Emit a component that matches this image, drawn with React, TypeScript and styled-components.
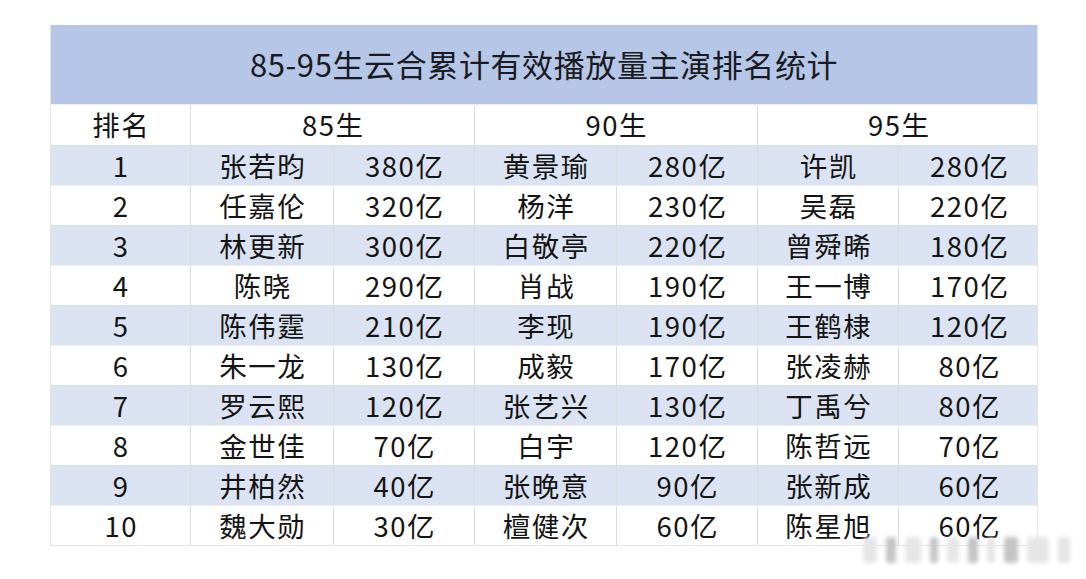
import React from 'react';
import styled, { createGlobalStyle } from 'styled-components';

const GlobalStyle = createGlobalStyle`
  html, body {
    margin: 0;
    padding: 0;
    background: #ffffff;
  }
  body {
    font-family: "Noto Sans CJK SC", "Noto Sans", sans-serif;
    color: #141414;
  }
`;

const COLS = '140px 143px 141px 142px 141px 141px 140px';

const Page = styled.div`
  position: relative;
  width: 1086px;
  height: 579px;
  padding: 25px 0 0 50px;
  box-sizing: border-box;
  overflow: hidden;
`;

const Table = styled.div`
  width: 988px;
  border-left: 1px solid #e4e4e4;
  border-right: 1px solid #e4e4e4;
  border-bottom: 1px solid #e4e4e4;
  box-sizing: border-box;
`;

const Title = styled.div`
  height: 79px;
  background: #b5c6e6;
  display: flex;
  align-items: center;
  justify-content: center;
  font-size: 31px;
  letter-spacing: 0.6px;
  color: #1a1b22;
  padding-bottom: 2px;
  box-sizing: border-box;
`;

const Row = styled.div<{ $shade?: boolean; $tall?: boolean }>`
  display: grid;
  grid-template-columns: ${COLS};
  height: ${({ $tall }) => ($tall ? '41px' : '40px')};
  background: ${({ $shade }) => ($shade ? '#dbe3f2' : '#ffffff')};
  border-top: 1px solid ${({ $shade }) => ($shade ? '#d6deee' : '#eeeeee')};
  box-sizing: border-box;
`;

const Cell = styled.div<{ $span?: number; $last?: boolean }>`
  grid-column: span ${({ $span }) => $span ?? 1};
  display: flex;
  align-items: center;
  justify-content: center;
  font-size: 27.5px;
  letter-spacing: 1.5px;
  padding-left: 1.5px;
  line-height: 1;
  overflow: hidden;
  border-right: ${({ $last }) => ($last ? 'none' : '1px solid #dcdcdc')};
`;

const Watermark = styled.div`
  position: absolute;
  left: 855px;
  top: 533px;
  width: 222px;
  height: 34px;
  display: flex;
  align-items: center;
  gap: 9px;
  padding-left: 8px;
  filter: blur(2px);
`;

const Streak = styled.span<{ $w: number; $dark?: boolean }>`
  width: ${({ $w }) => $w}px;
  height: 26px;
  background: ${({ $dark }) => ($dark ? '#c4c4c4' : '#e6e6e6')};
  border-radius: 3px;
`;

type Entry = [string, string];
const rows: { rank: string; a: Entry; b: Entry; c: Entry }[] = [
  { rank: '1', a: ['张若昀', '380亿'], b: ['黄景瑜', '280亿'], c: ['许凯', '280亿'] },
  { rank: '2', a: ['任嘉伦', '320亿'], b: ['杨洋', '230亿'], c: ['吴磊', '220亿'] },
  { rank: '3', a: ['林更新', '300亿'], b: ['白敬亭', '220亿'], c: ['曾舜晞', '180亿'] },
  { rank: '4', a: ['陈晓', '290亿'], b: ['肖战', '190亿'], c: ['王一博', '170亿'] },
  { rank: '5', a: ['陈伟霆', '210亿'], b: ['李现', '190亿'], c: ['王鹤棣', '120亿'] },
  { rank: '6', a: ['朱一龙', '130亿'], b: ['成毅', '170亿'], c: ['张凌赫', '80亿'] },
  { rank: '7', a: ['罗云熙', '120亿'], b: ['张艺兴', '130亿'], c: ['丁禹兮', '80亿'] },
  { rank: '8', a: ['金世佳', '70亿'], b: ['白宇', '120亿'], c: ['陈哲远', '70亿'] },
  { rank: '9', a: ['井柏然', '40亿'], b: ['张晚意', '90亿'], c: ['张新成', '60亿'] },
  { rank: '10', a: ['魏大勋', '30亿'], b: ['檀健次', '60亿'], c: ['陈星旭', '60亿'] },
];

export default function App() {
  return (
    <>
      <GlobalStyle />
      <Page>
        <Table>
          <Title>85-95生云合累计有效播放量主演排名统计</Title>
          <Row $tall>
            <Cell>排名</Cell>
            <Cell $span={2}>85生</Cell>
            <Cell $span={2}>90生</Cell>
            <Cell $span={2} $last>95生</Cell>
          </Row>
          {rows.map((r, i) => (
            <Row key={r.rank} $shade={i % 2 === 0}>
              <Cell>{r.rank}</Cell>
              <Cell>{r.a[0]}</Cell>
              <Cell>{r.a[1]}</Cell>
              <Cell>{r.b[0]}</Cell>
              <Cell>{r.b[1]}</Cell>
              <Cell>{r.c[0]}</Cell>
              <Cell $last>{r.c[1]}</Cell>
            </Row>
          ))}
        </Table>
        <Watermark>
          <Streak $w={14} />
          <Streak $w={10} $dark />
          <Streak $w={16} />
          <Streak $w={8} $dark />
          <Streak $w={12} />
          <Streak $w={10} $dark />
          <Streak $w={8} />
          <Streak $w={14} $dark />
          <Streak $w={22} />
          <Streak $w={12} />
        </Watermark>
      </Page>
    </>
  );
}
